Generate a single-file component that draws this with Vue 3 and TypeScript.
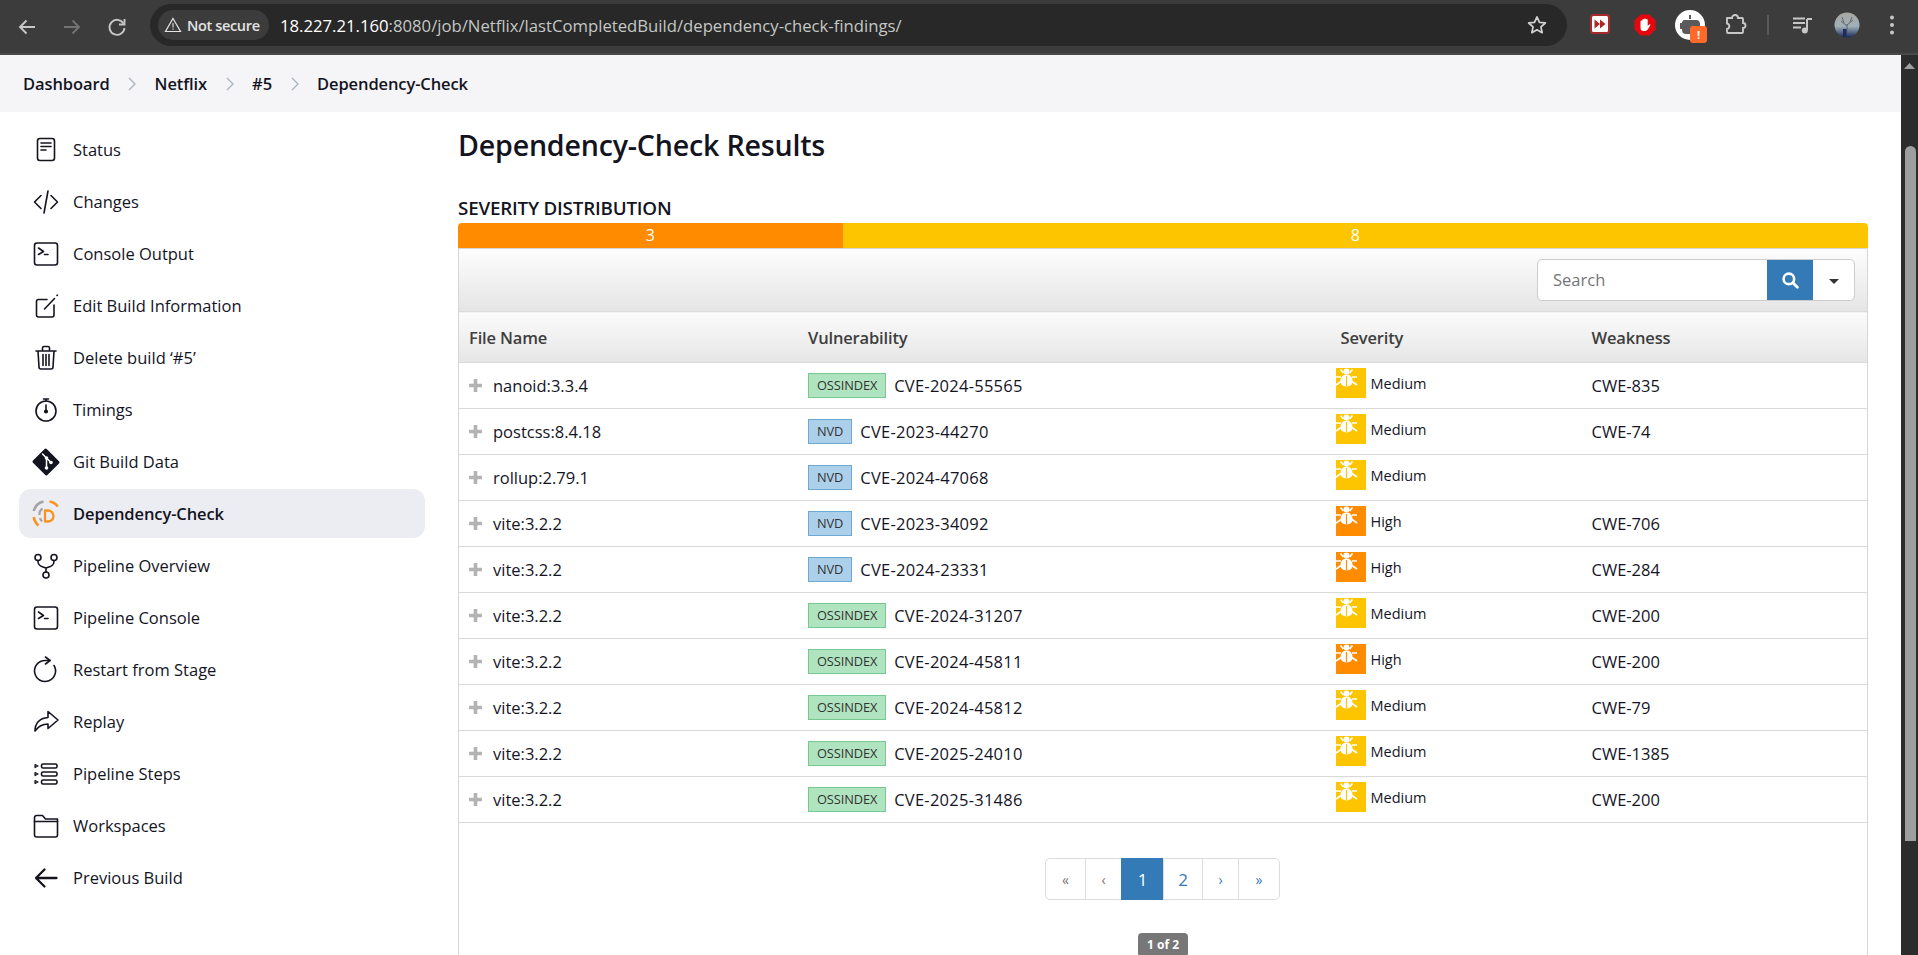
<script setup lang="ts">
interface Row { file: string; src: string; cve: string; sev: string; cwe: string }
const rows: Row[] = [
  { file: 'nanoid:3.3.4', src: 'OSSINDEX', cve: 'CVE-2024-55565', sev: 'Medium', cwe: 'CWE-835' },
  { file: 'postcss:8.4.18', src: 'NVD', cve: 'CVE-2023-44270', sev: 'Medium', cwe: 'CWE-74' },
  { file: 'rollup:2.79.1', src: 'NVD', cve: 'CVE-2024-47068', sev: 'Medium', cwe: '' },
  { file: 'vite:3.2.2', src: 'NVD', cve: 'CVE-2023-34092', sev: 'High', cwe: 'CWE-706' },
  { file: 'vite:3.2.2', src: 'NVD', cve: 'CVE-2024-23331', sev: 'High', cwe: 'CWE-284' },
  { file: 'vite:3.2.2', src: 'OSSINDEX', cve: 'CVE-2024-31207', sev: 'Medium', cwe: 'CWE-200' },
  { file: 'vite:3.2.2', src: 'OSSINDEX', cve: 'CVE-2024-45811', sev: 'High', cwe: 'CWE-200' },
  { file: 'vite:3.2.2', src: 'OSSINDEX', cve: 'CVE-2024-45812', sev: 'Medium', cwe: 'CWE-79' },
  { file: 'vite:3.2.2', src: 'OSSINDEX', cve: 'CVE-2025-24010', sev: 'Medium', cwe: 'CWE-1385' },
  { file: 'vite:3.2.2', src: 'OSSINDEX', cve: 'CVE-2025-31486', sev: 'Medium', cwe: 'CWE-200' },
]
const nav: { label: string; icon: string; active?: boolean }[] = [
  { label: 'Status', icon: 'status' },
  { label: 'Changes', icon: 'changes' },
  { label: 'Console Output', icon: 'console' },
  { label: 'Edit Build Information', icon: 'edit' },
  { label: 'Delete build ‘#5’', icon: 'trash' },
  { label: 'Timings', icon: 'timer' },
  { label: 'Git Build Data', icon: 'git' },
  { label: 'Dependency-Check', icon: 'dc', active: true },
  { label: 'Pipeline Overview', icon: 'fork' },
  { label: 'Pipeline Console', icon: 'console' },
  { label: 'Restart from Stage', icon: 'restart' },
  { label: 'Replay', icon: 'replay' },
  { label: 'Pipeline Steps', icon: 'steps' },
  { label: 'Workspaces', icon: 'folder' },
  { label: 'Previous Build', icon: 'back' },
]
const crumbs = ['Dashboard', 'Netflix', '#5', 'Dependency-Check']
const pages = [
  { t: '«', c: 'first dim' }, { t: '‹', c: 'dim' }, { t: '1', c: 'cur big' },
  { t: '2', c: 'big' }, { t: '›', c: '' }, { t: '»', c: 'last' },
]
</script>

<template>
  <div class="page">
    <header class="chrome">
      <svg class="tb" viewBox="0 0 24 24" width="24" height="24"><path d="M20 12H5M11.5 5.5 5 12l6.5 6.5" fill="none" stroke="#c7c7c7" stroke-width="1.9"/></svg>
      <svg class="tb fwd" viewBox="0 0 24 24" width="24" height="24"><path d="M4 12h15M12.5 5.5 19 12l-6.5 6.5" fill="none" stroke="#737373" stroke-width="1.9"/></svg>
      <svg class="tb rel" viewBox="0 0 24 24" width="24" height="24"><path d="M18.5 8.5A7.5 7.5 0 1 0 19.5 13" fill="none" stroke="#c7c7c7" stroke-width="1.9"/><path d="M19.5 4v5.5H14" fill="none" stroke="#c7c7c7" stroke-width="1.9"/></svg>
      <div class="omni">
        <div class="chip">
          <svg viewBox="0 0 18 18" width="18" height="18"><path d="M9 2.5 16.5 15.5H1.5Z" fill="none" stroke="#e3e3e3" stroke-width="1.2"/><path d="M9 7v4.5M9 12.5v1.3" stroke="#e3e3e3" stroke-width="1.1"/></svg>
          <span>Not secure</span>
        </div>
        <div class="url"><b>18.227.21.160</b>:8080/job/Netflix/lastCompletedBuild/dependency-check-findings/</div>
        <svg class="star" viewBox="0 0 24 24" width="22" height="22"><path d="m12 3.2 2.7 5.9 6.4.7-4.8 4.3 1.3 6.3L12 17.2l-5.6 3.2 1.3-6.3-4.8-4.3 6.4-.7Z" fill="none" stroke="#d0d0d0" stroke-width="1.9" stroke-linejoin="round"/></svg>
      </div>
      <div class="exts">
        <svg class="e1" viewBox="0 0 20 20" width="20" height="20"><rect x="1" y="1" width="18" height="18" rx="2.5" fill="#fff" stroke="#a62a2a" stroke-width="2"/><path d="M4.5 5.500 10 10l-5.500 4.500ZM10 5.500l5.500 4.500L10 14.500Z" fill="#b02525"/></svg>
        <svg class="e2" viewBox="0 0 22 22" width="22" height="22"><path d="M6.500 0.500h9l6 6v9l-6 6h-9l-6-6v-9Z" fill="#e4070f"/><path d="M6.500 11V7.500a.9.9 0 0 1 1.800 0V6a.9.9 0 0 1 1.800 0v-.5a.9.900 0 0 1 1.800 0V6a.9.9 0 0 1 1.800 0v6l1.500-1.500c.8-.6 1.500.2 1 1l-2.500 4a3 3 0 0 1-2.500 1.500h-1.500a3.200 3.200 0 0 1-3.200-3.200Z" fill="#fff"/></svg>
        <div class="e3">
          <svg viewBox="0 0 30 30" width="30" height="30"><circle cx="15" cy="15" r="15" fill="#fff"/><path d="M15 5v4M9 11h12a3 3 0 0 1 3 3v6a3 3 0 0 1-3 3H11a3 3 0 0 1-3-3v-2H6v-4h2a3 3 0 0 1 1-3Z" fill="#5a5a5a" stroke="#5a5a5a" stroke-width="2"/></svg>
          <span class="warn">!</span>
        </div>
        <svg class="e4" viewBox="0 0 24 24" width="24" height="24"><path d="M4 5h5a3 3 0 0 1 6 0h4a1 1 0 0 1 1 1v4a2.500 2.500 0 0 1 0 5v4a1 1 0 0 1-1 1H5a1 1 0 0 1-1-1v-3a2.800 2.800 0 0 0 0-5.500V6a1 1 0 0 1 0-1Z" fill="none" stroke="#c7c7c7" stroke-width="1.900"/></svg>
        <i class="sep"></i>
        <svg class="e5" viewBox="0 0 24 24" width="24" height="24"><path d="M2 5.500h12M2 10h12M2 14.500h8" stroke="#c7c7c7" stroke-width="1.900"/><path d="M16 6h5M16 6v11" stroke="#c7c7c7" stroke-width="2"/><circle cx="13.800" cy="17.500" r="3" fill="#c7c7c7"/></svg>
        <svg class="e6" viewBox="0 0 26 26" width="26" height="26"><defs><linearGradient id="av" x1="0" y1="0" x2="0" y2="1"><stop offset="0" stop-color="#a9a79f"/><stop offset=".55" stop-color="#9fb0b8"/><stop offset="1" stop-color="#1b2a5c"/></linearGradient></defs><circle cx="13" cy="13" r="12.500" fill="url(#av)"/><path d="M13 21v-9M13 14 7 9M13 13l6-5M10 11 8 5M16 10l2-5" stroke="#5a5f6a" stroke-width=".9" fill="none"/><rect x="9" y="17" width="3.500" height="8" fill="#1c2a5e"/></svg>
        <svg class="e7" viewBox="0 0 6 22" width="6" height="22"><circle cx="3" cy="3.500" r="2" fill="#c7c7c7"/><circle cx="3" cy="11" r="2" fill="#c7c7c7"/><circle cx="3" cy="18.500" r="2" fill="#c7c7c7"/></svg>
      </div>
    </header>

    <div class="under">
      <div class="content">
        <nav class="crumbs">
          <template v-for="(c, i) in crumbs" :key="c">
            <span class="crumb">{{ c }}</span>
            <svg v-if="i < crumbs.length - 1" class="chev" viewBox="0 0 10 16" width="10" height="16"><path d="m2 2 6 6-6 6" fill="none" stroke="#a9b2c2" stroke-width="1.300"/></svg>
          </template>
        </nav>
        <div class="body">
          <aside class="side">
            <a v-for="n in nav" :key="n.label" class="item" :class="{ active: n.active }">
              <svg class="ico" viewBox="0 0 28 28" width="28" height="28" fill="none" stroke="#14141f" stroke-width="1.600" stroke-linecap="round" stroke-linejoin="round">
                <template v-if="n.icon === 'status'"><rect x="5.500" y="2.500" width="17" height="22" rx="2.500"/><path d="M9 7h10M9 10.500h10M9 14h5"/></template>
                <template v-else-if="n.icon === 'changes'"><path d="M9 7.500 2.500 14 9 20.500M19 7.500l6.500 6.500-6.500 6.500M16 3 12 25"/></template>
                <template v-else-if="n.icon === 'console'"><rect x="2.500" y="3" width="23" height="22" rx="2.500"/><path d="m6.500 8 5 3.500-5 3M12.500 14.500h3.500"/></template>
                <template v-else-if="n.icon === 'edit'"><path d="M15 7.500H6.500a2 2 0 0 0-2 2V23a2 2 0 0 0 2 2h13.500a2 2 0 0 0 2-2v-10"/><path d="M12.500 17 22.500 6.500M25 3.500l.4-.4"/></template>
                <template v-else-if="n.icon === 'trash'"><path d="M4 7h20M10.500 6.500V4a1.500 1.500 0 0 1 1.500-1.500h4A1.500 1.500 0 0 1 17.500 4v2.500M6 7l1 16a2 2 0 0 0 2 2h10a2 2 0 0 0 2-2l1-16M11 10.500v11M14 10.500v11M17 10.500v11"/></template>
                <template v-else-if="n.icon === 'timer'"><circle cx="14" cy="15" r="10"/><path d="M14 3v2M14 9v5M11.500 3l5 0"/><circle cx="14" cy="15.500" r="1.300" fill="#14141f"/></template>
                <template v-else-if="n.icon === 'git'"><path d="M14.700 1 27 13.300a1.500 1.500 0 0 1 0 2.100L15.400 27a1.500 1.500 0 0 1-2.100 0L1 14.700a1.500 1.500 0 0 1 0-2.100L12.600 1a1.500 1.500 0 0 1 2.100 0Z" fill="#14141f" stroke="none"/><path d="m10.500 6 4 4v10M14.500 10l4.500 4.500" stroke="#fff" stroke-width="1.500"/><circle cx="14.500" cy="20" r="1.800" fill="#fff" stroke="none"/><circle cx="19" cy="14.500" r="1.800" fill="#fff" stroke="none"/><circle cx="14.500" cy="10" r="1.800" fill="#fff" stroke="none"/></template>
                <template v-else-if="n.icon === 'dc'"><path d="M1.800 11A13 13 0 0 1 11.500 1.500" stroke="#a3a3a3" stroke-width="2.600" stroke-linecap="butt"/><path d="M7.500 15a7 7 0 0 1 3-6.500" stroke="#a3a3a3" stroke-width="2.200" stroke-linecap="butt"/><path d="M17.500 1.500A13 13 0 0 1 25.800 6.500" stroke="#f7941d" stroke-width="2.600" stroke-linecap="butt"/><path d="M1.800 17a13 13 0 0 0 4.700 8.500" stroke="#f7941d" stroke-width="2.600" stroke-linecap="butt"/><path d="M8 18a7 7 0 0 0 2 3.500" stroke="#a3a3a3" stroke-width="2.200" stroke-linecap="butt"/><path d="M13 10.500h3a5.500 5.500 0 0 1 0 11h-3Z" stroke="#f7941d" stroke-width="2.300"/></template>
                <template v-else-if="n.icon === 'fork'"><circle cx="6" cy="5.500" r="3"/><circle cx="22" cy="5.500" r="3"/><circle cx="14" cy="23" r="3"/><path d="M6 8.500v1c0 3 3 5 5 5.500l3 1v4M22 8.500v1c0 3-3 5-5 5.500l-3 1"/></template>
                <template v-else-if="n.icon === 'restart'"><path d="M22 9.500A10.500 10.500 0 1 1 13 4.500l5 0"/><path d="m13.500 1 4.500 3.500-4.500 3.500"/></template>
                <template v-else-if="n.icon === 'replay'"><path d="M16 3.500 26 12l-10 8.500v-4.500c-6 0-9.500 2-13 7 0-7 4-13 13-13.500Z"/></template>
                <template v-else-if="n.icon === 'steps'"><rect x="9.500" y="4" width="15.500" height="4" rx="1.500"/><rect x="9.500" y="12" width="15.500" height="4" rx="1.500"/><rect x="9.500" y="20" width="15.500" height="4" rx="1.500"/><path d="m3 4.500 3 1.500-3 1.500ZM3 12.500l3 1.500-3 1.500ZM3 20.500l3 1.500-3 1.500Z" stroke-width="1.200"/></template>
                <template v-else-if="n.icon === 'folder'"><path d="M2.500 7V5.500a2 2 0 0 1 2-2h6l3 3.500H25.500v16a2 2 0 0 1-2 2h-19a2 2 0 0 1-2-2Z"/><path d="M2.500 9.500h23"/></template>
                <template v-else-if="n.icon === 'back'"><path d="M24.500 14H4.500M12.500 5.500 4 14l8.500 8.500" stroke-width="2.300"/></template>
              </svg>
              <span>{{ n.label }}</span>
            </a>
          </aside>
          <main class="main">
            <h1>Dependency-Check Results</h1>
            <h2>SEVERITY DISTRIBUTION</h2>
            <div class="dist">
              <div class="high" style="flex: 3">3</div>
              <div class="med" style="flex: 8">8</div>
            </div>
            <section class="panel">
              <div class="tools">
                <div class="search">
                  <span class="ph">Search</span>
                  <span class="go"><svg viewBox="0 0 16 16" width="18" height="18"><circle cx="7" cy="7" r="4.700" fill="none" stroke="#fff" stroke-width="2.300"/><path d="m10.500 10.500 4 4" stroke="#fff" stroke-width="2.500" stroke-linecap="round"/></svg></span>
                  <span class="dd"><i></i></span>
                </div>
              </div>
              <div class="thead">
                <span class="c1">File Name</span><span class="c2">Vulnerability</span><span class="c3">Severity</span><span class="c4">Weakness</span>
              </div>
              <div v-for="r in rows" :key="r.cve" class="row">
                <span class="c1 file"><svg viewBox="0 0 14 14" width="15" height="15"><path d="M7 1v12M1 7h12" stroke="#b3b3b3" stroke-width="3.400"/></svg>{{ r.file }}</span>
                <span class="c2 vuln"><em :class="r.src === 'NVD' ? 'nvd' : 'oss'">{{ r.src }}</em>{{ r.cve }}</span>
                <span class="c3 sev">
                  <span class="bug" :class="r.sev === 'High' ? 'b-high' : 'b-med'">
                    <svg viewBox="0 0 30 30" width="30" height="30"><circle cx="10.500" cy="3.500" r="3" fill="#fff"/><path d="M10.500 6.500c4 0 6 3 6 6.500s-2 5-6 5.500c-4-.5-6-2-6-5.500s2-6.500 6-6.500Z" fill="#fff"/><path d="M10.500 8v10.500" stroke="currentColor" stroke-width="1.200"/><path d="m4.500 1.500 3 3.500M16.500 1.500l-3 3.500M0 9h5M21 9h-5M0 17l5-3.500M21 17l-5-3.500" stroke="#fff" stroke-width="1.700" fill="none"/></svg>
                  </span>
                  <small>{{ r.sev }}</small>
                </span>
                <span class="c4">{{ r.cwe }}</span>
              </div>
              <div class="pager">
                <span v-for="p in pages" :key="p.t" class="pg" :class="p.c">{{ p.t }}</span>
              </div>
              <div class="count-wrap"><span class="count">1 of 2</span></div>
            </section>
          </main>
        </div>
      </div>
      <div class="scroll">
        <svg viewBox="0 0 17 17" width="17" height="17"><path d="M8.500 5 14 11H3Z" fill="#9e9e9e"/></svg>
        <div class="thumb"></div>
      </div>
    </div>
  </div>
</template>

<style>
html, body { margin: 0; height: 100%; overflow: hidden; background: #fff; }
</style>

<style scoped>
.page { width: 1918px; height: 955px; display: flex; flex-direction: column; overflow: hidden; font-family: "Open Sans", "Noto Sans", sans-serif; color: #14141f; }

.chrome { height: 53px; border-bottom: 2px solid #4a4a4a; background: #3c3c3c; display: flex; align-items: center; padding-left: 15px; flex: none; }
.tb { flex: none; margin-right: 21px; }
.omni { width: 1417px; height: 42px; margin-top: -3px; background: #282828; border-radius: 21px; display: flex; align-items: center; padding-left: 8px; box-sizing: border-box; flex: none; }
.chip { width: 111px; height: 30px; border-radius: 15px; background: #3c3c3c; display: flex; align-items: center; gap: 5px; padding-left: 6px; box-sizing: border-box; flex: none; color: #e3e3e3; font: 600 14.500px "Open Sans", sans-serif; white-space: nowrap; letter-spacing: -.35px; }
.url { margin-left: 11px; font: 400 16.700px "Open Sans", sans-serif; color: #c4c7c5; white-space: nowrap; }
.url b { font-weight: 400; color: #fff; }
.star { margin-left: auto; margin-right: 19px; }
.exts { position: relative; flex: 1; height: 100%; }
.exts > * { position: absolute; }
.e1 { left: 23px; top: 14px; }
.e2 { left: 67px; top: 14px; }
.e3 { left: 108px; top: 10px; width: 30px; height: 30px; }
.warn { position: absolute; left: 15px; top: 16px; width: 17px; height: 17px; background: #ff6a2b; border-radius: 3px; color: #fff; font: 700 11px/17px "Open Sans", sans-serif; text-align: center; }
.e4 { left: 156px; top: 13px; }
.sep { left: 200px; top: 15px; width: 2px; height: 20px; background: #5a5a5a; }
.e5 { left: 224px; top: 13px; }
.e6 { left: 267px; top: 12px; }
.e7 { left: 322px; top: 14px; }

.under { flex: 1; display: flex; min-height: 0; }
.content { flex: 1; min-width: 0; display: flex; flex-direction: column; }
.crumbs { height: 57px; background: #f5f5f8; display: flex; align-items: center; padding-left: 23px; flex: none; }
.crumb { font-size: 16.500px; font-weight: 600; white-space: nowrap; letter-spacing: -.1px; }
.chev { margin: 0 17.500px; }

.body { flex: 1; display: flex; min-height: 0; }
.side { width: 458px; box-sizing: border-box; padding: 13px 33px 0 19px; display: flex; flex-direction: column; gap: 3px; flex: none; }
.item { height: 49px; border-radius: 12px; display: flex; align-items: center; gap: 13px; padding-left: 13px; font-size: 16.500px; white-space: nowrap; flex: none; }
.item.active { background: #ecedf2; font-weight: 600; letter-spacing: -.1px; }
.ico { flex: none; }

.main { flex: 1; min-width: 0; padding-right: 33px; overflow: hidden; }
h1 { margin: 13px 0 0; font-size: 28.600px; line-height: 40px; font-weight: 600; letter-spacing: -.2px; }
h2 { margin: 31px 0 0; font-size: 18.800px; line-height: 24px; font-weight: 600; letter-spacing: -.2px; }
.dist { display: flex; height: 25px; margin-top: 3px; border-radius: 4px 4px 0 0; overflow: hidden; color: #fff; font-size: 16px; line-height: 25px; text-align: center; }
.high { background: #ff8c00; }
.med { background: #fdc500; }

.panel { border: solid #d6d6d6; border-width: 1px 1px 0; height: 720px; }
.tools { height: 63px; box-sizing: border-box; border-bottom: 1px solid #dcdcdc; background: linear-gradient(#fdfdfd, #e5e5e5); display: flex; justify-content: flex-end; align-items: flex-start; padding: 10px 12px 0 0; }
.search { width: 318px; height: 42px; box-sizing: border-box; border: 1px solid #ccc; border-radius: 5px; background: #fff; display: flex; overflow: hidden; }
.ph { flex: 1; padding-left: 15px; line-height: 40px; color: #757575; font-size: 16.500px; }
.go { width: 46px; background: #337ab7; display: flex; align-items: center; justify-content: center; margin: -1px 0; }
.dd { width: 41px; display: flex; align-items: center; justify-content: center; }
.dd i { border: 5px solid transparent; border-top-color: #333; border-bottom: 0; margin-top: 2px; }

.thead, .row { display: grid; grid-template-columns: 349px 532.500px 251px 1fr; align-items: center; }
.thead { height: 51px; box-sizing: border-box; border-top: 1px solid #f2f2f2; border-bottom: 1px solid #dadada; background: linear-gradient(#fbfbfb, #e6e6e6); color: #3e3e3e; font-size: 16.500px; font-weight: 600; letter-spacing: -.15px; }
.row { height: 46px; box-sizing: border-box; border-bottom: 1px solid #d9d9d9; font-size: 16.500px; }
.c1 { padding-left: 9px; }
.thead .c1 { padding-left: 10px; }
.file { display: flex; align-items: center; gap: 10px; white-space: nowrap; }
.vuln { display: flex; align-items: center; white-space: nowrap; letter-spacing: .25px; }
.vuln em { font-style: normal; font-size: 12.800px; height: 25px; box-sizing: border-box; padding: 0 8px; margin-right: 8px; color: #333; letter-spacing: -.1px; display: block; }
.oss { background: #b0e3bf; border: 1px solid #76ca90; line-height: 23px; }
.nvd { background: #acd0ea; border: 1px solid #6ea8d4; line-height: 23px; }
.sev { display: flex; align-items: flex-start; height: 100%; padding-top: 5px; margin-left: -5px; box-sizing: border-box; }
.bug { width: 30px; height: 30px; flex: none; display: block; }
.bug svg { display: block; }
.b-med { background: #fdc500; color: #fdc500; }
.b-high { background: #ff8c00; color: #ff8c00; }
.sev small { font-size: 14.500px; margin-left: 5px; line-height: 31px; }

.pager { display: flex; justify-content: center; margin: 35px 0 0 9px; padding-right: 9px; height: 42px; }
.pg { box-sizing: border-box; border: 1px solid #ddd; margin-left: -1px; min-width: 37px; padding: 0 14px; display: flex; align-items: center; justify-content: center; color: #337ab7; font-size: 14px; }
.pg.first { border-radius: 5px 0 0 5px; width: 41px; }
.pg.last { border-radius: 0 5px 5px 0; width: 42px; }
.pg.dim { color: #777; }
.pg.big { font-size: 17px; width: 40px; }
.pg.cur { background: #337ab7; border-color: #337ab7; color: #fff; width: 43px; }
.count-wrap { display: flex; justify-content: center; margin-top: 33px; }
.count { background: #777; color: #fff; font-size: 12px; font-weight: 700; height: 24px; line-height: 24px; padding: 0 9px; border-radius: 4px; white-space: nowrap; }

.scroll { width: 17px; flex: none; background: #2c2c2c; display: flex; flex-direction: column; }
.scroll svg { display: block; margin-top: 3px; }
.thumb { width: 11px; height: 695px; background: #9e9e9e; margin: 71px 0 0 4px; border-radius: 6px 6px 0 0; }
</style>
